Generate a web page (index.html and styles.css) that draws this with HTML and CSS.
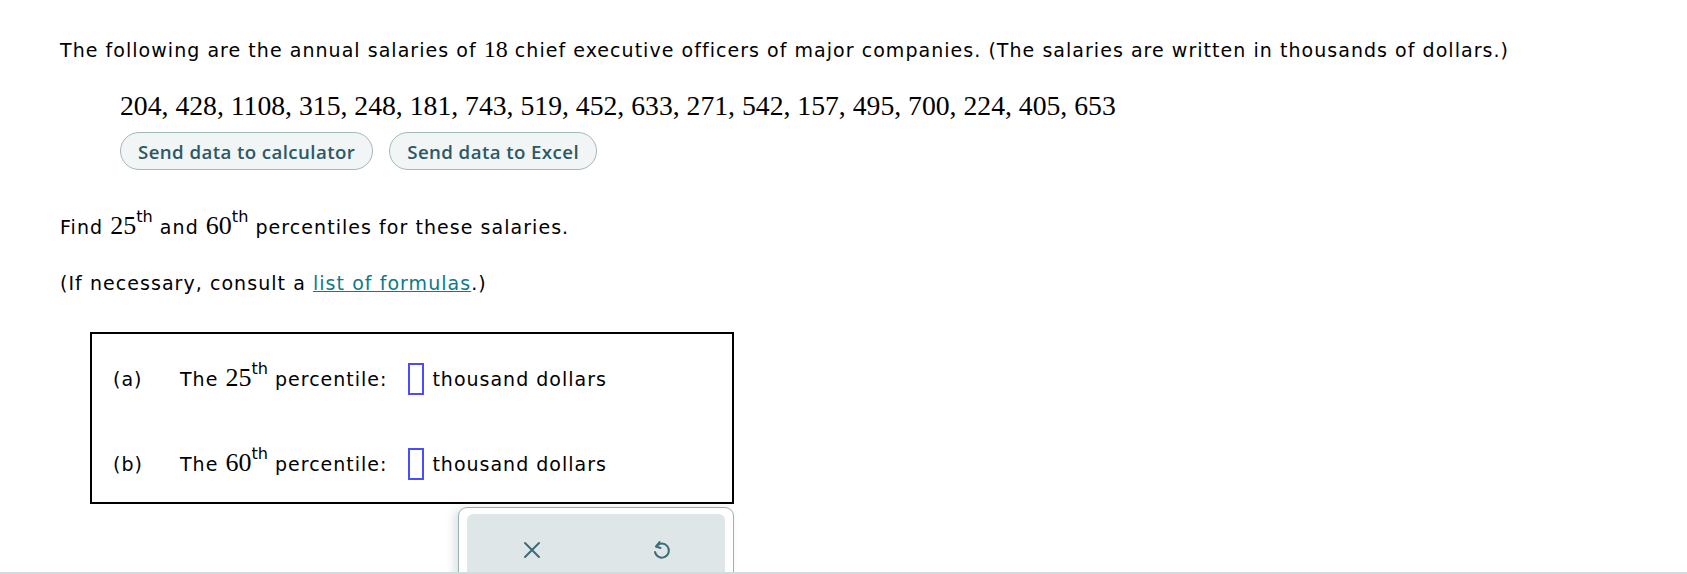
FILE: index.html
```html
<!DOCTYPE html>
<html>
<head>
<meta charset="utf-8">
<link rel="stylesheet" href="styles.css">
</head>
<body>
<div class="page">
  <p class="intro">The following are the annual salaries of <span class="num">18</span> chief executive officers of major companies. (The salaries are written in thousands of dollars.)</p>
  <div class="data">
    <div class="nums">204, 428, 1108, 315, 248, 181, 743, 519, 452, 633, 271, 542, 157, 495, 700, 224, 405, 653</div>
    <div class="btns">
      <button class="btn">Send data to calculator</button>
      <button class="btn">Send data to Excel</button>
    </div>
  </div>
  <p class="find">Find <span class="num big">25</span><sup>th</sup> and <span class="num big">60</span><sup>th</sup> percentiles for these salaries.</p>
  <p class="help">(If necessary, consult a <a href="#" class="link">list of formulas</a>.)</p>
  <div class="answer">
    <div class="row">
      <span class="lbl">(a)</span>
      <span class="q">The <span class="num big">25</span><sup>th</sup> percentile:</span>
      <span class="inp"></span>
      <span class="unit">thousand dollars</span>
    </div>
    <div class="row">
      <span class="lbl">(b)</span>
      <span class="q">The <span class="num big">60</span><sup>th</sup> percentile:</span>
      <span class="inp"></span>
      <span class="unit">thousand dollars</span>
    </div>
  </div>
  <div class="toolbar">
    <div class="tool-inner">
      <svg class="ico" width="20" height="20" viewBox="0 0 20 20"><path d="M3 3 L17 17 M17 3 L3 17" stroke="#3d6b78" stroke-width="2" fill="none" stroke-linecap="round"/></svg>
      <svg class="ico" width="20" height="20" viewBox="0 0 20 20"><path d="M5.2 6.5 A7 7 0 1 1 4 12" stroke="#3d6b78" stroke-width="2" fill="none" stroke-linecap="round"/><path d="M8.5 2 L5 6.5 L9.5 8" stroke="#3d6b78" stroke-width="2" fill="none" stroke-linecap="round" stroke-linejoin="round"/></svg>
    </div>
  </div>
</div>
<div class="bottombar"></div>
</body>
</html>
```
FILE: styles.css
```css
html, body {
  margin: 0;
  padding: 0;
  background: #fff;
}
body {
  font-family: "DejaVu Sans", sans-serif;
  color: #000;
  overflow: hidden;
  height: 574px;
}
.page {
  padding: 38px 0 0 60px;
}
.intro {
  margin: 0;
  font-size: 19px;
  line-height: 24px;
  letter-spacing: 1.04px;
  white-space: nowrap;
}
.num {
  font-family: "Liberation Serif", "Times New Roman", serif;
  font-size: 24px;
  line-height: 0;
  letter-spacing: 0;
}
.num.big {
  font-size: 26px;
}
sup {
  font-size: 0.85em;
  line-height: 0;
  vertical-align: 0.75em;
  letter-spacing: 0;
}
.data {
  padding-left: 60px;
  margin-top: 28px;
}
.nums {
  font-family: "Liberation Serif", "Times New Roman", serif;
  font-size: 27.7px;
  line-height: 32px;
}
.btns {
  display: flex;
  gap: 16px;
  margin-top: 10px;
}
.btn {
  font-family: "Open Sans", sans-serif;
  font-weight: 600;
  font-size: 18.7px;
  letter-spacing: 0.4px;
  color: #2d5866;
  background: #f1f5f6;
  border: 1px solid #a3b8bd;
  border-radius: 19px;
  height: 38px;
  padding: 0 17px;
  margin: 0;
}
.find {
  margin: 45px 0 0 0;
  font-size: 19px;
  line-height: 24px;
  letter-spacing: 1.05px;
}
.help {
  margin: 32px 0 0 0;
  font-size: 19px;
  line-height: 24px;
  letter-spacing: 1.05px;
}
.link {
  color: #0b7a8c;
  text-decoration: underline;
}
.answer {
  margin: 37px 0 0 30px;
  width: 640px;
  height: 168px;
  border: 2px solid #000;
  box-sizing: content-box;
  display: flex;
  flex-direction: column;
  padding: 0;
}
.row {
  display: flex;
  align-items: center;
  height: 32px;
  font-size: 19px;
  letter-spacing: 1px;
  padding-left: 21px;
  white-space: nowrap;
}
.row:first-child {
  margin-top: 29px;
}
.row + .row {
  margin-top: 53px;
}
.lbl {
  width: 67px;
}
.q {
  margin-right: 21px;
}
.inp {
  width: 12px;
  height: 28px;
  border: 2px solid #4b4bff;
  margin-right: 8px;
}
.toolbar {
  margin: 3px 0 0 398px;
  height: 80px;
  border: 1px solid #9bb1b7;
  border-radius: 9px;
  background: #fff;
  box-shadow: -4px 2px 8px rgba(120,140,145,0.25);
  padding: 6px 8px 0 8px;
  box-sizing: border-box;
  width: 276px;
}
.tool-inner {
  background: #dfe6e8;
  border-radius: 6px;
  height: 80px;
  display: flex;
  justify-content: space-around;
  padding-top: 26px;
  box-sizing: border-box;
  align-items: flex-start;
}
.bottombar {
  position: fixed;
  left: 0;
  right: 0;
  bottom: 0;
  height: 2px;
  background: #d3dbdc;
}
```
